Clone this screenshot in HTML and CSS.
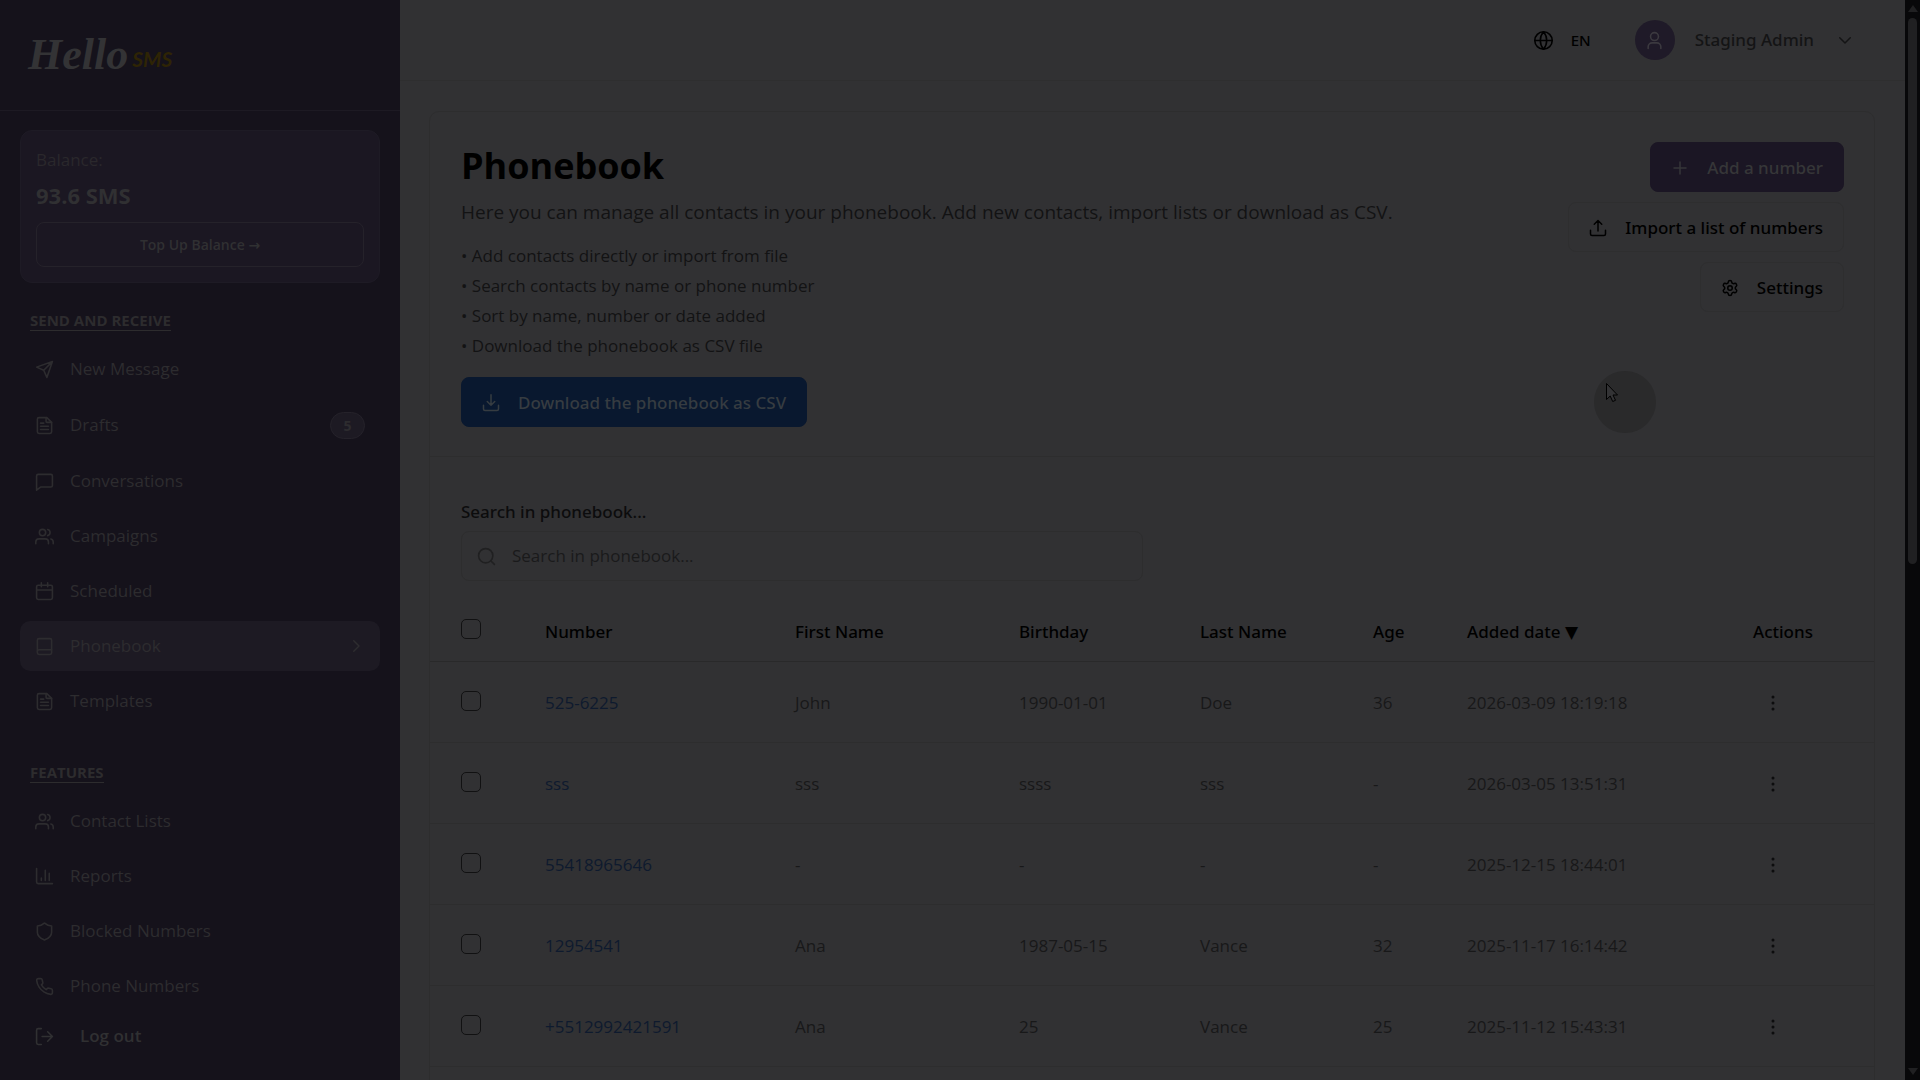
FILE: index.html
```html
<!DOCTYPE html>
<html lang="en">
<head>
<meta charset="utf-8">
<title>Phonebook - Hello SMS</title>
<link rel="stylesheet" href="styles.css">
</head>

<body>
<!-- icon sprite -->
<svg class="sprite" aria-hidden="true">
	<symbol id="send" viewBox="0 0 24 24"><path d="M22 2 11 13M22 2l-7 20-4-9-9-4 20-7z"/></symbol>
	<symbol id="file" viewBox="0 0 24 24"><path d="M15 2H5a2 2 0 0 0-2 2v16a2 2 0 0 0 2 2h14a2 2 0 0 0 2-2V8z"/><path d="M14 2v5a1 1 0 0 0 1 1h6M11 9H7M17 13H7M17 17H7"/></symbol>
	<symbol id="chat" viewBox="0 0 24 24"><path d="M22 17a2 2 0 0 1-2 2H7l-5 4V5a2 2 0 0 1 2-2h16a2 2 0 0 1 2 2z"/></symbol>
	<symbol id="users" viewBox="0 0 24 24"><path d="M17 21v-2a4 4 0 0 0-4-4H5a4 4 0 0 0-4 4v2"/><circle cx="9.500" cy="7" r="4"/><path d="M23 21v-2a4 4 0 0 0-3-3.870M16 3.130a4 4 0 0 1 0 7.750"/></symbol>
	<symbol id="calendar" viewBox="0 0 24 24"><rect x="2" y="4" width="20" height="18" rx="2"/><path d="M16 1v5M8 1v5M2 10h20"/></symbol>
	<symbol id="book" viewBox="0 0 24 24"><rect x="3" y="2" width="18" height="20" rx="2"/><path d="M3 18a2 2 0 0 1 2-2h16"/></symbol>
	<symbol id="chart" viewBox="0 0 24 24"><path d="M2 2v17a2 2 0 0 0 2 2h18M8 17v-3M13 17V4M18 17V8"/></symbol>
	<symbol id="shield" viewBox="0 0 24 24"><path d="M21 13c0 5-3.500 7.500-8.500 9.500a1 1 0 0 1-1 0C6.500 20.500 3 18 3 13V5c3 0 6-1 8.300-3.200a1 1 0 0 1 1.400 0C15 4 18 5 21 5z"/></symbol>
	<symbol id="phone" viewBox="0 0 24 24"><path d="M22 16.920v3a2 2 0 0 1-2.180 2 19.790 19.790 0 0 1-8.630-3.070 19.500 19.500 0 0 1-6-6 19.790 19.790 0 0 1-3.070-8.670A2 2 0 0 1 4.110 2h3a2 2 0 0 1 2 1.720c.127.960.361 1.903.700 2.810a2 2 0 0 1-.450 2.110L8.090 9.910a16 16 0 0 0 6 6l1.270-1.270a2 2 0 0 1 2.110-.450c.907.339 1.850.573 2.810.700A2 2 0 0 1 22 16.920z"/></symbol>
	<symbol id="logout" viewBox="0 0 24 24"><path d="M8 22H4a2 2 0 0 1-2-2V4a2 2 0 0 1 2-2h4M16 18l6-6-6-6M22 12H9"/></symbol>
	<symbol id="right" viewBox="0 0 24 24"><path d="m9 19 7-7-7-7"/></symbol>
	<symbol id="down" viewBox="0 0 24 24"><path d="m5 9 7 7 7-7"/></symbol>
	<symbol id="globe" viewBox="0 0 24 24"><circle cx="12" cy="12" r="11"/><path d="M12 1a17 17 0 0 0 0 22 17 17 0 0 0 0-22M1 12h22"/></symbol>
	<symbol id="user" viewBox="0 0 24 24"><path d="M20 22v-2a5 5 0 0 0-5-5H9a5 5 0 0 0-5 5v2"/><circle cx="12" cy="7" r="5"/></symbol>
	<symbol id="plus" viewBox="0 0 24 24"><path d="M4 12h16M12 4v16"/></symbol>
	<symbol id="upload" viewBox="0 0 24 24"><path d="M22 15v5a2 2 0 0 1-2 2H4a2 2 0 0 1-2-2v-5M17 7l-5-5-5 5M12 2v14"/></symbol>
	<symbol id="download" viewBox="0 0 24 24"><path d="M22 15v5a2 2 0 0 1-2 2H4a2 2 0 0 1-2-2v-5M7 10l5 5 5-5M12 15V1"/></symbol>
	<symbol id="gear" viewBox="0 0 24 24"><path d="M9.671 4.136a2.340 2.340 0 0 1 4.659 0 2.340 2.340 0 0 0 3.319 1.915 2.340 2.340 0 0 1 2.330 4.033 2.340 2.340 0 0 0 0 3.831 2.340 2.340 0 0 1-2.330 4.033 2.340 2.340 0 0 0-3.319 1.915 2.340 2.340 0 0 1-4.659 0 2.340 2.340 0 0 0-3.320-1.915 2.340 2.340 0 0 1-2.330-4.033 2.340 2.340 0 0 0 0-3.831A2.340 2.340 0 0 1 6.350 6.051a2.340 2.340 0 0 0 3.319-1.915"/><circle cx="12" cy="12" r="3"/></symbol>
	<symbol id="search" viewBox="0 0 24 24"><circle cx="11" cy="11" r="9"/><path d="m22 22-4-4"/></symbol>
	<symbol id="dots" viewBox="0 0 24 24"><circle cx="12" cy="4" r="1"/><circle cx="12" cy="12" r="1"/><circle cx="12" cy="20" r="1"/></symbol>
</svg>

<aside class="sidebar">
	<a class="logo" href="#"><span class="logo-hello">Hello</span><span class="logo-sms">SMS</span></a>
	<div class="balance">
		<p class="balance-label">Balance:</p>
		<p class="balance-value">93.6 SMS</p>
		<button class="topup" type="button">Top Up Balance <span class="glyph">→</span></button>
	</div>
	<nav class="menu">
		<h2 class="menu-title">SEND AND RECEIVE</h2>
		<a class="item" href="#"><svg class="icon"><use href="#send"/></svg>New Message</a>
		<a class="item item-badge" href="#"><svg class="icon"><use href="#file"/></svg>Drafts<span class="badge">5</span></a>
		<a class="item" href="#"><svg class="icon"><use href="#chat"/></svg>Conversations</a>
		<a class="item" href="#"><svg class="icon"><use href="#users"/></svg>Campaigns</a>
		<a class="item" href="#"><svg class="icon"><use href="#calendar"/></svg>Scheduled</a>
		<a class="item active" href="#"><svg class="icon"><use href="#book"/></svg>Phonebook<svg class="icon arrow"><use href="#right"/></svg></a>
		<a class="item" href="#"><svg class="icon"><use href="#file"/></svg>Templates</a>
	</nav>
	<nav class="menu features">
		<h2 class="menu-title">FEATURES</h2>
		<a class="item" href="#"><svg class="icon"><use href="#users"/></svg>Contact Lists</a>
		<a class="item" href="#"><svg class="icon"><use href="#chart"/></svg>Reports</a>
		<a class="item" href="#"><svg class="icon"><use href="#shield"/></svg>Blocked Numbers</a>
		<a class="item" href="#"><svg class="icon"><use href="#phone"/></svg>Phone Numbers</a>
	</nav>
	<button class="logout" type="button"><svg class="icon"><use href="#logout"/></svg>Log out</button>
</aside>

<div class="page">
	<header class="topbar">
		<button class="lang" type="button"><svg class="icon"><use href="#globe"/></svg>EN</button>
		<button class="account" type="button">
			<span class="avatar"><svg class="icon"><use href="#user"/></svg></span>
			Staging Admin
			<svg class="icon caret"><use href="#down"/></svg>
		</button>
	</header>

	<main class="card">
		<section class="intro">
			<div class="intro-text">
				<h1>Phonebook</h1>
				<p class="lead">Here you can manage all contacts in your phonebook. Add new contacts, import lists or download as CSV.</p>
				<ul class="tips">
					<li>• Add contacts directly or import from file</li>
					<li>• Search contacts by name or phone number</li>
					<li>• Sort by name, number or date added</li>
					<li>• Download the phonebook as CSV file</li>
				</ul>
				<button class="btn blue" type="button"><svg class="icon"><use href="#download"/></svg>Download the phonebook as CSV</button>
			</div>
			<div class="intro-actions">
				<button class="btn purple" type="button"><svg class="icon"><use href="#plus"/></svg>Add a number</button>
				<button class="btn" type="button"><svg class="icon"><use href="#upload"/></svg>Import a list of numbers</button>
				<button class="btn" type="button"><svg class="icon"><use href="#gear"/></svg>Settings</button>
			</div>
		</section>

		<section class="search">
			<label for="q">Search in phonebook...</label>
			<div class="search-box">
				<svg class="icon"><use href="#search"/></svg>
				<input id="q" type="text" placeholder="Search in phonebook...">
			</div>
		</section>

		<table class="contacts">
			<colgroup>
				<col class="c-check"><col class="c-number"><col class="c-first"><col class="c-birth"><col class="c-last"><col class="c-age"><col class="c-date"><col class="c-act">
			</colgroup>
			<thead>
				<tr>
					<th><input type="checkbox" aria-label="Select all"></th>
					<th>Number</th><th>First Name</th><th>Birthday</th><th>Last Name</th><th>Age</th><th>Added date <span class="glyph">▼</span></th><th>Actions</th>
				</tr>
			</thead>
			<tbody>
				<tr>
					<td><input type="checkbox" aria-label="Select row"></td>
					<td><a href="#">525-6225</a></td><td>John</td><td>1990-01-01</td><td>Doe</td><td>36</td><td>2026-03-09 18:19:18</td>
					<td><button class="more" type="button" aria-label="Actions"><svg class="icon"><use href="#dots"/></svg></button></td>
				</tr>
				<tr>
					<td><input type="checkbox" aria-label="Select row"></td>
					<td><a href="#">sss</a></td><td>sss</td><td>ssss</td><td>sss</td><td>-</td><td>2026-03-05 13:51:31</td>
					<td><button class="more" type="button" aria-label="Actions"><svg class="icon"><use href="#dots"/></svg></button></td>
				</tr>
				<tr>
					<td><input type="checkbox" aria-label="Select row"></td>
					<td><a href="#">55418965646</a></td><td>-</td><td>-</td><td>-</td><td>-</td><td>2025-12-15 18:44:01</td>
					<td><button class="more" type="button" aria-label="Actions"><svg class="icon"><use href="#dots"/></svg></button></td>
				</tr>
				<tr>
					<td><input type="checkbox" aria-label="Select row"></td>
					<td><a href="#">12954541</a></td><td>Ana</td><td>1987-05-15</td><td>Vance</td><td>32</td><td>2025-11-17 16:14:42</td>
					<td><button class="more" type="button" aria-label="Actions"><svg class="icon"><use href="#dots"/></svg></button></td>
				</tr>
				<tr>
					<td><input type="checkbox" aria-label="Select row"></td>
					<td><a href="#">+5512992421591</a></td><td>Ana</td><td>25</td><td>Vance</td><td>25</td><td>2025-11-12 15:43:31</td>
					<td><button class="more" type="button" aria-label="Actions"><svg class="icon"><use href="#dots"/></svg></button></td>
				</tr>
			</tbody>
		</table>
	</main>
</div>

<div class="scrollbar">
	<span class="up"></span>
	<span class="thumb"></span>
	<span class="dn"></span>
</div>

<div class="pointer">
	<svg viewBox="0 0 12 19"><path d="M.5.5v16l3.700-3.500 2.500 5.500 2.800-1.200-2.500-5.300h4.500z"/></svg>
</div>
</body>

</html>
```

FILE: styles.css
```css
*
{
	box-sizing:border-box;
	margin:0;
	padding:0;
}
body
{
	display:flex;
	height:100vh;
	overflow:hidden;
	background-color:#313133;
	font-family:"Open Sans","Noto Sans",sans-serif;
	font-size:17px;
	line-height:24px;
	color:#181819;
}
button,input
{
	font:inherit;
	color:inherit;
	background:none;
	border:none;
}
a
{
	color:inherit;
	text-decoration:none;
}
.sprite
{
	position:absolute;
	width:0;
	height:0;
}
.icon
{
	width:19px;
	height:19px;
	flex:none;
	fill:none;
	stroke:currentColor;
	stroke-width:2;
	stroke-linecap:round;
	stroke-linejoin:round;
}
.glyph
{
	font-family:"DejaVu Sans",sans-serif;
}
/* medium weight only exists in Noto */
.lang,.account,.btn,.search label,.contacts th
{
	font-family:"Noto Sans",sans-serif;
	font-weight:500;
}

/* sidebar */
.sidebar
{
	flex:0 0 400px;
	background-color:#15121b;
	color:#303032;
}
.logo
{
	display:flex;
	align-items:center;
	gap:4px;
	height:111px;
	padding:0 28px;
	border-bottom:1px solid #1d1a23;
}
.logo-hello
{
	font-family:"Liberation Serif",serif;
	font-style:italic;
	font-weight:bold;
	font-size:44px;
	color:#333335;
}
.logo-sms
{
	font-family:Lato,sans-serif;
	font-style:italic;
	font-weight:bold;
	font-size:21px;
	padding-top:8px;
	color:#2e2405;
}
.balance
{
	margin:19px 20px 0;
	padding:15px;
	border:1px solid #1e1b25;
	border-radius:12px;
	background-color:#1b1722;
}
.balance-label
{
	line-height:28px;
	color:#2a282c;
}
.balance-value
{
	font-size:22px;
	font-weight:bold;
	line-height:42px;
}
.topup
{
	display:block;
	width:100%;
	height:45px;
	margin-top:6px;
	border:1px solid #25222a;
	border-radius:8px;
	font-size:14px;
	font-weight:600;
}
.menu
{
	padding:27px 20px 0;
}
.features
{
	padding-top:31px;
}
.menu-title
{
	display:table;
	margin:0 10px 13px;
	border-bottom:1px solid #2d2c2e;
	font-size:15px;
	font-weight:bold;
	line-height:20px;
	color:#2d2c2e;
}
.item
{
	display:flex;
	align-items:center;
	gap:16px;
	height:50px;
	margin-bottom:5px;
	padding:0 15px;
	border-radius:10px;
	color:#2d2c2f;
}
.item-badge
{
	height:52px;
}
.active
{
	background-color:#1d1a23;
}
.arrow
{
	width:18px;
	height:18px;
	margin-left:auto;
}
.badge
{
	width:35px;
	margin-left:auto;
	border:1px solid #25222a;
	border-radius:14px;
	background-color:#1d1a23;
	font-size:14px;
	font-weight:bold;
	line-height:25px;
	text-align:center;
}
.logout
{
	display:flex;
	align-items:center;
	gap:26px;
	height:40px;
	padding:0 35px;
	font-weight:600;
}

/* right side */
.page
{
	flex:1;
	min-width:0;
}
.topbar
{
	display:flex;
	align-items:center;
	justify-content:flex-end;
	gap:44px;
	height:81px;
	padding-right:49px;
	border-bottom:1px solid #2e2e2f;
}
.lang
{
	display:flex;
	align-items:center;
	gap:18px;
	font-size:15px;
	color:#000;
}
.account
{
	display:flex;
	align-items:center;
	gap:20px;
	color:#141415;
}
.avatar
{
	display:flex;
	align-items:center;
	justify-content:center;
	width:40px;
	height:40px;
	border-radius:50%;
	background-color:#1f1a28;
	color:#3b393f;
}
.caret
{
	width:18px;
	height:18px;
	margin:0 2px;
}
.card
{
	margin:30px 30px 0 29px;
	padding-bottom:40px;
	border:1px solid #2d2d2e;
	border-radius:10px;
}
.intro
{
	display:flex;
	justify-content:space-between;
	padding:30px 30px 29px 31px;
	border-bottom:1px solid #2d2d2e;
}
h1
{
	font-size:36px;
	line-height:48px;
	color:#000;
}
.lead
{
	padding-top:2px;
	font-size:19px;
	line-height:40px;
	color:#131314;
}
.tips
{
	padding:9px 0 16px;
	list-style:none;
	line-height:30px;
	color:#131314;
}
.intro-actions
{
	display:flex;
	flex-direction:column;
	align-items:flex-end;
	gap:10px;
}
.btn
{
	display:flex;
	align-items:center;
	gap:18px;
	height:50px;
	padding:2px 20px 0;
	border:1px solid #2e2e2f;
	border-radius:8px;
	color:#000;
}
.btn .icon
{
	width:18px;
	height:18px;
}
.purple
{
	border-color:#1b1624;
	background-color:#1b1624;
	color:#363638;
}
.blue
{
	border-color:#09182f;
	background-color:#09182f;
	color:#363c41;
}
.search
{
	padding:43px 31px 0;
}
.search label
{
	display:block;
	margin-bottom:7px;
	color:#0c0c0d;
}
.search-box
{
	display:flex;
	align-items:center;
	gap:16px;
	max-width:682px;
	height:50px;
	padding:0 15px;
	border:1px solid #2d2d2e;
	border-radius:8px;
	color:#202021;
}
.search-box input
{
	flex:1;
	outline:none;
}
.search-box input::placeholder
{
	color:#1a1a1b;
	opacity:1;
}

/* table */
.contacts
{
	width:100%;
	margin-top:18px;
	table-layout:fixed;
	border-collapse:collapse;
	text-align:left;
}
.contacts th,.contacts td
{
	height:81px;
	padding:2px 0 0;
	border-bottom:1px solid #2d2d2e;
}
.contacts th
{
	height:62px;
	padding-top:4px;
	border-bottom-color:#29292a;
	color:#000;
}
.contacts th:first-child,.contacts td:first-child
{
	padding:0 0 2px 31px;
}
.contacts td:nth-child(2)
{
	color:#0e1a2e;
}
.c-check
{
	width:115px;
}
.c-number
{
	width:250px;
}
.c-first
{
	width:224px;
}
.c-birth
{
	width:181px;
}
.c-last
{
	width:173px;
}
.c-age
{
	width:94px;
}
.c-date
{
	width:286px;
}
input[type=checkbox]
{
	display:block;
	appearance:none;
	width:20px;
	height:20px;
	border:1px solid #111112;
	border-radius:5px;
}
.more
{
	display:block;
	padding:0 11px;
	color:#0c0c0d;
}
.more .icon
{
	display:block;
	width:18px;
	height:18px;
}

/* scrollbar */
.scrollbar
{
	display:flex;
	flex-direction:column;
	align-items:center;
	flex:0 0 15px;
	padding:5px 0;
	background-color:#08080a;
}
.up,.dn
{
	border:5px solid transparent;
	border-top:none;
	border-bottom:7px solid #202022;
}
.thumb
{
	width:9px;
	height:51%;
	margin:6px 0 auto;
	border-radius:5px;
	background-color:#202022;
}
.dn
{
	border-bottom:none;
	border-top:7px solid #202022;
}

/* mouse pointer with its halo */
.pointer
{
	position:absolute;
	left:1594px;
	top:371px;
	width:62px;
	height:62px;
	padding:12px;
	border-radius:50%;
	background-color:#2a2a2b;
}
.pointer svg
{
	display:block;
	width:12px;
	height:19px;
	fill:#333335;
	stroke:#000;
}
```
